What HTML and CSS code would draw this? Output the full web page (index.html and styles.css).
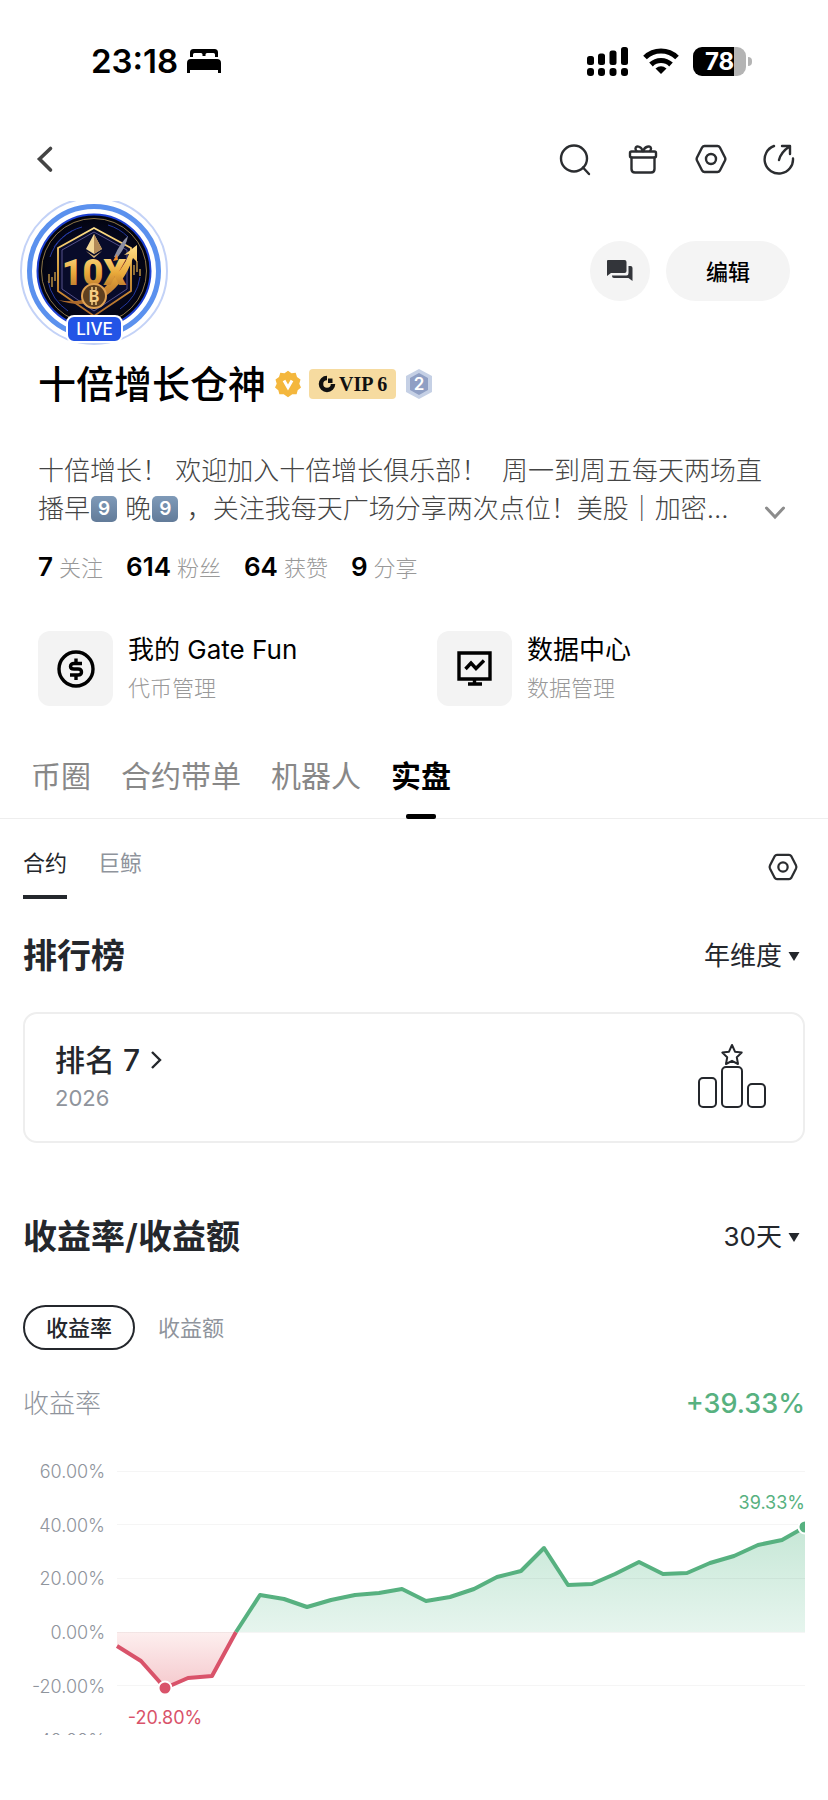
FILE: index.html
```html
<!DOCTYPE html>
<html lang="zh-CN">
<head>
  <meta charset="UTF-8">
  <meta name="viewport" content="width=device-width, initial-scale=1.0">
  <title>十倍增长仓神</title>
  <link rel="stylesheet" href="styles.css">
</head>
<body>
  <!-- Status bar -->
  <div class="status-bar">
    <div class="status-left">
      <span class="status-time">23:18</span>
      <svg width="34" height="24" viewBox="0 0 34 24">
        <path d="M3 8V3.500Q3 0 6.500 0H27.500Q31 0 31 3.500V8H28V5.500Q28 4 26.500 4H20Q18.500 4 18.500 5.500V7H15.500V5.500Q15.500 4 14 4H7.500Q6 4 6 5.500V8Z"/>
        <path d="M0 24V14Q0 10 4 10H30Q34 10 34 14V24H31V21H3V24Z"/>
      </svg>
    </div>
    <div class="status-right">
      <svg width="42" height="29" viewBox="0 0 42 29">
        <rect x="0" y="9" width="7" height="9" rx="2.500"/>
        <rect x="11" y="6.500" width="7" height="11.500" rx="2.500"/>
        <rect x="22.500" y="3.500" width="7" height="14.500" rx="2.500"/>
        <rect x="34" y="0" width="7" height="18" rx="2.500"/>
        <rect x="0" y="21" width="7" height="8" rx="3"/>
        <rect x="11" y="21" width="7" height="8" rx="3"/>
        <rect x="22.500" y="21" width="7" height="8" rx="3"/>
        <rect x="34" y="21" width="7" height="8" rx="3"/>
      </svg>
      <svg width="36" height="28" viewBox="0 0 36 28">
        <path d="M2 10.500A23 23 0 0 1 34 10.500" fill="none" stroke="#000" stroke-width="5.200"/>
        <path d="M8 17.500A14.500 14.500 0 0 1 28 17.500" fill="none" stroke="#000" stroke-width="5.200"/>
        <path d="M12.500 21.500Q18 17 23.500 21.500L18 27Z"/>
      </svg>
      <div class="battery"><span>78</span></div>
    </div>
  </div>

  <!-- Top navigation -->
  <div class="navbar">
    <button class="icon-button" aria-label="返回">
      <svg width="32" height="32" viewBox="0 0 32 32"><path d="M21.500 4.500L10.500 15L21.500 26" fill="none" stroke="#444" stroke-width="3.600" stroke-linecap="round"/></svg>
    </button>
    <div class="nav-actions">
      <button class="icon-button" aria-label="搜索">
        <svg class="line-icon" width="32" height="32" viewBox="0 0 32 32"><circle cx="15" cy="14.500" r="13"/><path d="M24 23.500L30 30"/></svg>
      </button>
      <button class="icon-button" aria-label="礼物">
        <svg class="line-icon" width="32" height="32" viewBox="0 0 32 32"><rect x="3" y="7.500" width="26" height="6" rx="1.500"/><path d="M4.500 13.500V25Q4.500 28.500 8 28.500H24Q27.500 28.500 27.500 25V13.500"/><path d="M15.500 7C15 3 9 .500 8.500 4.500Q8.500 6 9.500 7M16.500 7C17 3 23.500 .500 24 4.500Q24 6 23 7"/></svg>
      </button>
      <button class="icon-button" aria-label="设置">
        <svg class="line-icon" width="32" height="32" viewBox="0 0 32 32"><path d="M9.500 2H22.500Q24 2 24.800 3.300L30 13.500Q30.700 15 30 16.500L24.800 26.700Q24 28 22.500 28H9.500Q8 28 7.200 26.700L2 16.500Q1.300 15 2 13.500L7.200 3.300Q8 2 9.500 2Z"/><circle cx="16" cy="15" r="5"/></svg>
      </button>
      <button class="icon-button" aria-label="分享">
        <svg class="line-icon" width="32" height="32" viewBox="0 0 32 32"><path d="M11 2A14.200 14.200 0 1 0 30 14.500"/><path d="M16 16Q18 8 26.500 2.500M19 2H27V10"/></svg>
      </button>
    </div>
  </div>

  <!-- Profile -->
  <div class="profile-header">
    <div class="avatar">
      <svg width="148" height="148" viewBox="0 0 148 148">
        <defs>
          <linearGradient id="gold" x1="0" y1="0" x2="0" y2="1">
            <stop offset="0" stop-color="#ffe08a"/>
            <stop offset="0.500" stop-color="#e9a93a"/>
            <stop offset="1" stop-color="#a9662a"/>
          </linearGradient>
          <radialGradient id="night">
            <stop offset="0" stop-color="#12163f"/>
            <stop offset="0.700" stop-color="#05071c"/>
            <stop offset="1" stop-color="#02030d"/>
          </radialGradient>
          <clipPath id="ring-clip"><rect x="0" y="4" width="148" height="144"/></clipPath>
        </defs>
        <circle cx="74" cy="74" r="73" fill="none" stroke="#c3d2f7" stroke-width="2" clip-path="url(#ring-clip)"/>
        <circle cx="74" cy="74" r="64.500" fill="none" stroke="#5b91ee" stroke-width="5"/>
        <circle cx="74" cy="74" r="56.500" fill="url(#night)" stroke="#1c3fd0" stroke-width="2"/>
        <circle cx="74" cy="74" r="52.500" fill="none" stroke="#8d7648" stroke-width="1"/>
        <g fill="none" stroke="#2438a0" stroke-width="1">
          <path d="M30 60A46 46 0 0 1 62 30M28 84A47 47 0 0 0 48 114M100 112A46 46 0 0 0 120 80M88 28A47 47 0 0 1 108 40M34 50A46 46 0 0 1 52 34"/>
        </g>
        <path d="M74 31L111 51V94L74 119L38 94V51Z" fill="#080b2a" stroke="url(#gold)" stroke-width="1.800"/>
        <path d="M74 35L107 53V92L74 114L42 92V53Z" fill="none" stroke="#54508a" stroke-width="1"/>
        <path d="M29 77V86M32 80V90M35 75V84M114 68V78M117 64V75M120 72V79" stroke="#b78d42" stroke-width="1.500"/>
        <path d="M74 37L66 52L74 57L82 52Z" fill="#f3d795"/>
        <path d="M74 37V57L82 52Z" fill="#b38a58"/>
        <path d="M66 54L74 59L82 54L74 61Z" fill="#d9b377"/>
        <path d="M94 60Q100 46 108 39Q106 50 97 61Z" fill="#8d8fa2"/>
        <path d="M93 64L97 57L98 63Z" fill="#f08a2c"/>
        <path d="M38 103Q68 109 87 88Q104 71 109 57L104 58L117 48V65L113 61Q104 86 87 98Q66 113 38 103Z" fill="url(#gold)"/>
        <text class="avatar-text" x="74" y="88" text-anchor="middle" fill="url(#gold)">10X</text>
        <circle cx="74" cy="99" r="12" fill="#60401f" stroke="#e0a252" stroke-width="2"/>
        <text class="avatar-coin" x="74" y="105" text-anchor="middle">B</text>
        <path d="M72 90V93M76 90V93M72 105V108M76 105V108" stroke="#f6cd83" stroke-width="1.500"/>
      </svg>
      <span class="live-badge">LIVE</span>
    </div>
    <div class="profile-actions">
      <button class="message-button" aria-label="私信">
        <svg width="28" height="24" viewBox="0 0 28 24"><path fill="#33353a" d="M2 1H18.500Q20.500 1 20.500 3V12Q20.500 14 18.500 14H5L1 17V2Q1 1 2 1Z"/><path fill="#33353a" d="M22.500 7H24.500Q26.500 7 26.500 9V22L22.500 19H8Q6 19 6 17V16.500H20.500Q22.500 16.500 22.500 14Z"/></svg>
      </button>
      <button class="edit-button">编辑</button>
    </div>
  </div>

  <div class="name-row">
    <h1>十倍增长仓神</h1>
    <svg class="verified" width="28" height="28" viewBox="0 0 28 28">
      <path fill="#f4b73d" d="M14 .800L17.500 3.200L21.700 2.800L23 7L26.500 9.500L25.300 13.700L27 17.600L23.700 20.200L22.600 24.300H18.300L14 27.200L9.700 24.300H5.400L4.300 20.200L1 17.600L2.700 13.700L1.500 9.500L5 7L6.300 2.800L10.500 3.200Z"/>
      <path d="M10 10.500L14 17.500L18 10.500" fill="none" stroke="#fff" stroke-width="3"/>
    </svg>
    <span class="vip-badge">
      <svg width="18" height="18" viewBox="0 0 18 18"><path d="M9 3A6 6 0 1 0 15 9" fill="none" stroke="#111" stroke-width="4.500"/><path d="M10 3.500H14.500V8H10Z" fill="#111"/></svg>
      VIP 6
    </span>
    <svg width="28" height="32" viewBox="0 0 28 32">
      <path d="M14 1L27 8V24L14 31L1 24V8Z" fill="#c5d0e5"/>
      <path d="M14 5L23 10V22L14 27L5 22V10Z" fill="#8f9fc4"/>
      <text class="level-text" x="14" y="22" text-anchor="middle">2</text>
    </svg>
  </div>

  <div class="bio">
    <p>十倍增长！&nbsp;欢迎加入十倍增长俱乐部！&nbsp;&nbsp;周一到周五每天两场直<br>播早<span class="keycap">9</span>&nbsp;晚<span class="keycap">9</span>&nbsp;，关注我每天广场分享两次点位！美股｜加密...</p>
    <button class="icon-button" aria-label="展开">
      <svg width="26" height="26" viewBox="0 0 26 26"><path d="M4.500 6L13 15L21.500 6" fill="none" stroke="#8c8c8c" stroke-width="3" stroke-linecap="round"/></svg>
    </button>
  </div>

  <ul class="stats">
    <li><strong>7</strong><span>关注</span></li>
    <li><strong>614</strong><span>粉丝</span></li>
    <li><strong>64</strong><span>获赞</span></li>
    <li><strong>9</strong><span>分享</span></li>
  </ul>

  <div class="shortcuts">
    <a class="shortcut" href="#">
      <span class="shortcut-icon">
        <svg width="40" height="40" viewBox="0 0 40 40" fill="none" stroke="#000" stroke-width="3.400"><circle cx="20" cy="20" r="17"/><path d="M26 14.500H18Q14.500 14.500 14.500 17.500Q14.500 20 18 20H22Q25.500 20 25.500 23Q25.500 26 22 26H14M20 9.500V14.500M20 26V31"/></svg>
      </span>
      <span class="shortcut-text"><b>我的 Gate Fun</b><small>代币管理</small></span>
    </a>
    <a class="shortcut" href="#">
      <span class="shortcut-icon">
        <svg width="40" height="40" viewBox="0 0 40 40" fill="none" stroke="#000" stroke-width="3.400"><path d="M4 4H35V30H4ZM19.500 30V35M13 35H27M10.500 20L16 14L21 19.500L29 11.500"/></svg>
      </span>
      <span class="shortcut-text"><b>数据中心</b><small>数据管理</small></span>
    </a>
  </div>

  <!-- Tabs -->
  <nav class="tabs">
    <a href="#">币圈</a>
    <a href="#">合约带单</a>
    <a href="#">机器人</a>
    <a href="#" class="active">实盘</a>
  </nav>

  <main class="content">
    <div class="sub-tabs">
      <a href="#" class="active">合约</a>
      <a href="#">巨鲸</a>
      <button class="icon-button sub-settings" aria-label="显示设置">
        <svg class="line-icon" width="30" height="28" viewBox="0 0 32 30"><path d="M9.500 2H22.500Q24 2 24.800 3.300L30 13.500Q30.700 15 30 16.500L24.800 26.700Q24 28 22.500 28H9.500Q8 28 7.200 26.700L2 16.500Q1.300 15 2 13.500L7.200 3.300Q8 2 9.500 2Z"/><circle cx="16" cy="15" r="5"/></svg>
      </button>
    </div>

    <!-- Ranking -->
    <div class="section-header">
      <h2>排行榜</h2>
      <label class="picker">
        <select aria-label="排行榜周期"><option>年维度</option></select>
        <svg width="12" height="10" viewBox="0 0 12 10"><path d="M.500 1H11.500L6 10Z" fill="#24272c"/></svg>
      </label>
    </div>
    <a class="rank-card" href="#">
      <span class="rank-info">
        <b>排名 7
          <svg width="12" height="20" viewBox="0 0 12 20"><path d="M2 2L10 10L2 18" fill="none" stroke="#24272c" stroke-width="2.400"/></svg>
        </b>
        <small>2026</small>
      </span>
      <svg class="podium" width="70" height="66" viewBox="0 0 70 66">
        <rect x="2" y="32" width="17" height="29" rx="4"/>
        <rect x="25" y="21" width="20" height="40" rx="4"/>
        <rect x="51" y="38" width="17" height="23" rx="4"/>
        <path d="M35 -1L38 5.700L44.700 6.600L39.800 11.300L41 18L35 14.800L29 18L30.200 11.300L25.300 6.600L32 5.700Z"/>
      </svg>
    </a>

    <!-- Profit -->
    <div class="section-header profit-header">
      <h2>收益率/收益额</h2>
      <label class="picker">
        <select aria-label="收益周期"><option>30天</option></select>
        <svg width="12" height="10" viewBox="0 0 12 10"><path d="M.500 1H11.500L6 10Z" fill="#24272c"/></svg>
      </label>
    </div>
    <div class="segments">
      <button class="active">收益率</button>
      <button>收益额</button>
    </div>
    <div class="summary">
      <span>收益率</span>
      <strong>+39.33%</strong>
    </div>

    <div class="chart">
      <svg viewBox="0 0 782 286" role="img" aria-label="收益率走势">
        <defs>
          <linearGradient id="gain" gradientUnits="userSpaceOnUse" x1="0" y1="77" x2="0" y2="183">
            <stop offset="0" stop-color="#c6e7d6"/>
            <stop offset="1" stop-color="#e6f5ee"/>
          </linearGradient>
          <linearGradient id="loss" gradientUnits="userSpaceOnUse" x1="0" y1="183" x2="0" y2="239">
            <stop offset="0" stop-color="#fdefef"/>
            <stop offset="1" stop-color="#f5c9cd"/>
          </linearGradient>
        </defs>
        <path d="M94 183V197L118 212L142 239L165 229L189 227L213 183Z" fill="url(#loss)"/>
        <path d="M213 183L237 146L261 150L284 158L308 151L332 146L356 144L379 140L403 152L427 148L451 140L474 128L498 122L521 99L545 136L569 135L592 125L616 113L640 125L664 124L687 114L711 107L735 96L759 91L782 78V183Z" fill="url(#gain)"/>
        <path class="grid-line" d="M94 22.500H782M94 75.500H782M94 129.500H782M94 183.500H782M94 236.500H782"/>
        <g class="axis-labels">
          <text x="82" y="29">60.00%</text>
          <text x="82" y="83">40.00%</text>
          <text x="82" y="136">20.00%</text>
          <text x="82" y="190">0.00%</text>
          <text x="82" y="244">-20.00%</text>
          <text x="82" y="298">-40.00%</text>
        </g>
        <path class="curve loss" d="M94 197L118 212L142 239L165 229L189 227L213 183"/>
        <path class="curve gain" d="M213 183L237 146L261 150L284 158L308 151L332 146L356 144L379 140L403 152L427 148L451 140L474 128L498 122L521 99L545 136L569 135L592 125L616 113L640 125L664 124L687 114L711 107L735 96L759 91L782 78"/>
        <circle class="dot loss" cx="142" cy="239" r="6.500"/>
        <circle class="dot gain" cx="782" cy="78" r="6.500"/>
        <text class="point-label loss" x="142" y="275" text-anchor="middle">-20.80%</text>
        <text class="point-label gain" x="782" y="60" text-anchor="end">39.33%</text>
      </svg>
    </div>
  </main>
</body>
</html>
```
FILE: styles.css
```css
/* General Styles */
* {
  box-sizing: border-box;
}

body {
  margin: 0;
  background: #fff;
  color: #000;
  font-family: Inter, "Noto Sans CJK SC", sans-serif;
}

h1, h2, p, ul {
  margin: 0;
  padding: 0;
}

a {
  color: inherit;
  text-decoration: none;
}

svg {
  display: block;
  flex-shrink: 0;
}

button, select {
  font-family: inherit;
  border: none;
  background: none;
  padding: 0;
  color: inherit;
  cursor: pointer;
}

.line-icon {
  fill: none;
  stroke: #2b2d30;
  stroke-width: 2.4;
  stroke-linecap: round;
  stroke-linejoin: round;
}

/* Status bar */
.status-bar {
  display: flex;
  justify-content: space-between;
  align-items: center;
  height: 84px;
  padding: 38px 76px 0 91px;
}

.status-left, .status-right {
  display: flex;
  align-items: center;
}

.status-left {
  gap: 9px;
}

.status-right {
  gap: 14px;
}

.status-time {
  font-size: 33px;
  font-weight: 600;
}

.battery {
  position: relative;
  width: 53px;
  height: 29px;
  margin-right: 6px;
  border-radius: 9px;
  background: linear-gradient(90deg, #000 78%, #b4b4b4 78%);
  color: #fff;
  font-size: 24px;
  font-weight: 700;
  line-height: 29px;
  text-align: center;
}

.battery::after {
  content: "";
  position: absolute;
  right: -6px;
  top: 10px;
  width: 4px;
  height: 9px;
  border-radius: 0 4px 4px 0;
  background: #b4b4b4;
}

/* Top navigation */
.navbar {
  display: flex;
  justify-content: space-between;
  padding: 60px 33px 0 29px;
}

.nav-actions {
  display: flex;
  gap: 36px;
}

/* Profile */
.profile-header {
  display: flex;
  justify-content: space-between;
  align-items: center;
  padding: 21px 38px 0 20px;
}

.avatar {
  position: relative;
}

.avatar-text {
  font-family: Roboto, sans-serif;
  font-size: 36px;
  font-weight: 900;
}

.avatar-coin {
  font-size: 16px;
  font-weight: 700;
  fill: #f6cd83;
}

.live-badge {
  position: absolute;
  left: 46px;
  bottom: 2px;
  width: 57px;
  height: 28px;
  border: 2px solid #fff;
  border-radius: 8px;
  background: #2354e6;
  color: #fff;
  font-size: 17px;
  font-weight: 500;
  line-height: 24px;
  text-align: center;
}

.profile-actions {
  display: flex;
  gap: 16px;
}

.message-button {
  display: flex;
  justify-content: center;
  align-items: center;
  width: 60px;
  height: 60px;
  border-radius: 50%;
  background: #f4f4f4;
}

.edit-button {
  width: 124px;
  height: 60px;
  padding-bottom: 2px;
  border-radius: 30px;
  background: #f4f4f4;
  font-size: 22px;
  font-weight: 500;
}

.name-row {
  display: flex;
  align-items: center;
  height: 50px;
  margin-top: 14px;
  padding: 0 38px;
}

.name-row h1 {
  font-size: 38px;
  font-weight: 500;
  line-height: 50px;
}

.verified {
  margin: 0 7px 0 8px;
}

.vip-badge {
  display: flex;
  align-items: center;
  gap: 3px;
  height: 30px;
  margin-right: 9px;
  padding: 0 9px;
  border-radius: 4px;
  background: #f6dba0;
  color: #111;
  font-family: "Liberation Serif", serif;
  font-size: 20px;
  font-weight: 700;
}

.level-text {
  fill: #fff;
  font-size: 17px;
  font-weight: 600;
}

.bio {
  display: flex;
  align-items: flex-end;
  justify-content: space-between;
  margin-top: 43px;
  padding: 0 40px 0 38px;
  color: #444;
  font-size: 26px;
  font-weight: 300;
  line-height: 38px;
}

.bio p {
  white-space: nowrap;
}

.keycap {
  display: inline-block;
  width: 26px;
  height: 26px;
  margin: 0 1px;
  border-radius: 5px;
  background: linear-gradient(#7f9ab8, #627b99);
  color: #fff;
  font-size: 19px;
  font-weight: 600;
  line-height: 26px;
  text-align: center;
  vertical-align: 3px;
}

.stats {
  display: flex;
  gap: 23px;
  margin-top: 24px;
  padding: 0 38px;
  list-style: none;
}

.stats li {
  display: flex;
  align-items: baseline;
  gap: 6px;
  height: 30px;
  line-height: 30px;
}

.stats strong {
  font-size: 26px;
  font-weight: 600;
}

.stats span {
  color: #999;
  font-size: 22px;
  font-weight: 300;
}

.shortcuts {
  display: grid;
  grid-template-columns: 1fr 1fr;
  gap: 46px;
  margin-top: 49px;
  padding: 0 38px;
}

.shortcut {
  display: flex;
  gap: 15px;
}

.shortcut-icon {
  display: flex;
  justify-content: center;
  align-items: center;
  width: 75px;
  height: 75px;
  border-radius: 12px;
  background: #f3f3f3;
}

.shortcut-text b {
  display: block;
  font-size: 26px;
  font-weight: 400;
  line-height: 38px;
}

.shortcut-text small {
  display: block;
  color: #999;
  font-size: 22px;
  font-weight: 300;
  line-height: 38px;
}

/* Tabs */
.tabs {
  display: flex;
  gap: 30px;
  margin-top: 47px;
  padding: 0 31px;
  border-bottom: 1px solid #eee;
  color: #888;
  font-size: 30px;
  line-height: 44px;
}

.tabs a {
  position: relative;
  padding-bottom: 20px;
}

.tabs .active {
  color: #000;
  font-weight: 600;
}

.tabs .active::after {
  content: "";
  position: absolute;
  left: 50%;
  bottom: -1px;
  width: 30px;
  height: 5px;
  margin-left: -15px;
  border-radius: 2px;
  background: #000;
}

.content {
  padding: 0 23px 64px;
  color: #24272c;
}

.sub-tabs {
  display: flex;
  gap: 31px;
  margin-top: 28px;
  color: #8f949c;
  font-size: 22px;
  line-height: 32px;
}

.sub-tabs a {
  padding-bottom: 16px;
  border-bottom: 4px solid transparent;
}

.sub-tabs .active {
  border-color: #24272c;
  color: #24272c;
}

.sub-settings {
  align-self: flex-start;
  margin: 6px 7px 0 auto;
}

/* Ranking */
.section-header {
  display: flex;
  justify-content: space-between;
  align-items: center;
  height: 48px;
  margin-top: 33px;
}

.section-header h2 {
  padding-bottom: 5px;
  font-size: 34px;
  font-weight: 600;
}

.picker {
  display: flex;
  align-items: center;
  gap: 6px;
  margin-right: 5px;
}

.picker select {
  appearance: none;
  font-size: 26px;
  line-height: 40px;
  text-align-last: right;
}

.rank-card {
  display: flex;
  justify-content: space-between;
  align-items: center;
  margin-top: 32px;
  padding: 26px 36px 24px 30px;
  border: 2px solid #eee;
  border-radius: 14px;
}

.rank-info b {
  display: flex;
  align-items: center;
  gap: 10px;
  font-size: 30px;
  font-weight: 500;
  line-height: 40px;
}

.rank-info small {
  display: block;
  color: #8f949c;
  font-size: 22px;
  line-height: 37px;
}

.podium {
  fill: none;
  stroke: #24272c;
  stroke-width: 2;
  stroke-linejoin: round;
  overflow: visible;
}

/* Profit */
.profit-header {
  margin-top: 70px;
}

.segments {
  display: flex;
  margin-top: 44px;
}

.segments button {
  height: 45px;
  padding: 0 21px 4px;
  border: 2px solid transparent;
  border-radius: 23px;
  color: #8f949c;
  font-size: 22px;
}

.segments .active {
  border-color: #24272c;
  color: #24272c;
  font-weight: 500;
}

.summary {
  display: flex;
  justify-content: space-between;
  margin-top: 34px;
  color: #8f949c;
  font-size: 26px;
  font-weight: 300;
  line-height: 40px;
}

.summary strong {
  color: #57b180;
  font-size: 27px;
  font-weight: 500;
}

/* Chart */
.chart {
  margin-top: 25px;
}

.chart svg {
  width: 100%;
  height: auto;
  overflow: hidden;
}

.grid-line {
  stroke: #000;
  stroke-opacity: 0.04;
}

.axis-labels {
  fill: #8f949c;
  font-size: 18px;
  font-weight: 300;
  text-anchor: end;
}

.curve {
  fill: none;
  stroke-width: 4;
  stroke-linejoin: round;
}

.curve.gain {
  stroke: #57b180;
}

.curve.loss {
  stroke: #d9536a;
}

.dot {
  stroke: #fff;
  stroke-width: 2;
}

.dot.gain, .point-label.gain {
  fill: #57b180;
}

.dot.loss, .point-label.loss {
  fill: #d9536a;
}

.point-label {
  font-size: 18px;
}
```
